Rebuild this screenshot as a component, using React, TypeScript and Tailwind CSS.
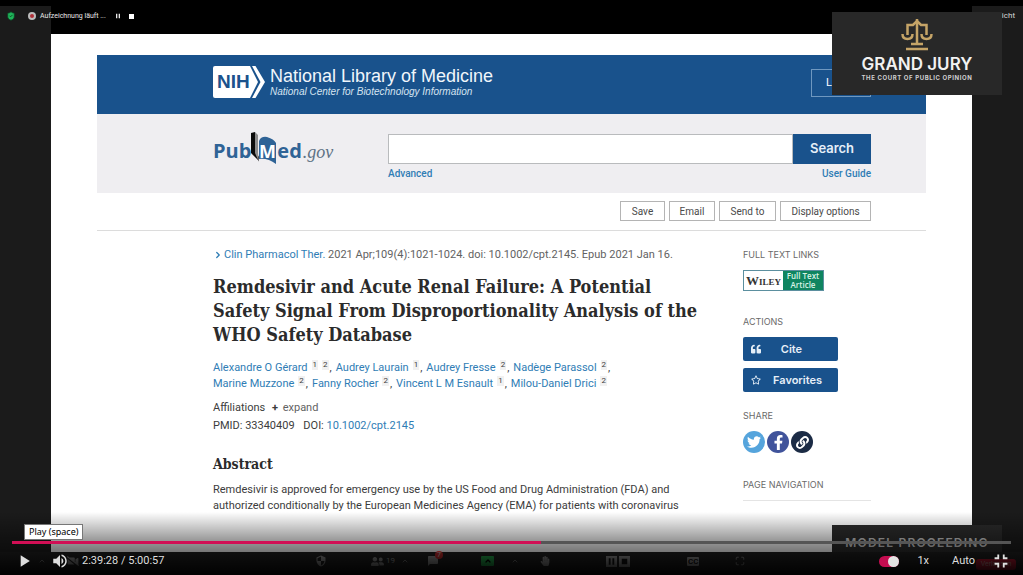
import { FC, ReactNode, useState } from 'react';
import { FaFacebookF, FaLink, FaQuoteLeft, FaRegStar, FaTwitter, FaUserFriends, FaHandPaper, FaVideoSlash } from 'react-icons/fa';
import { MdChatBubble, MdFullscreenExit, MdPause, MdPlayArrow, MdSecurity, MdStop, MdVolumeUp } from 'react-icons/md';
import { ChevronRight, ChevronUp, Maximize, ShieldCheck } from 'lucide-react';

interface Author {
    name: string;
    refs: string[];
}

const authors: Author[] = [
    { name: 'Alexandre O Gérard', refs: ['1', '2'] },
    { name: 'Audrey Laurain', refs: ['1'] },
    { name: 'Audrey Fresse', refs: ['2'] },
    { name: 'Nadège Parassol', refs: ['2'] },
    { name: 'Marine Muzzone', refs: ['2'] },
    { name: 'Fanny Rocher', refs: ['2'] },
    { name: 'Vincent L M Esnault', refs: ['1'] },
    { name: 'Milou-Daniel Drici', refs: ['2'] },
];

const DURATION = 18057;

const formatTime = (total: number) => {
    const h = Math.floor(total / 3600);
    const m = Math.floor((total % 3600) / 60);
    const s = total % 60;
    return `${h}:${String(m).padStart(2, '0')}:${String(s).padStart(2, '0')}`;
};

const NihLogo: FC = () => (
    <div className="relative h-8 w-[52px]">
        <svg viewBox="0 0 52 32" className="h-8 w-[52px]" aria-hidden="true">
            <path d="M2 0H37L45 16L37 32H2Q0 32 0 30V2Q0 0 2 0Z" fill="#fff" />
            <path d="M39 0H42.500L52 16L42.500 32H39L47.500 16Z" fill="#fff" />
        </svg>
        <span className="absolute left-1 top-1 font-['Liberation_Sans',sans-serif] text-[19px] font-bold leading-6 text-[#1b528c]">
            NIH
        </span>
    </div>
);

const PubMedLogo: FC = () => (
    <a href="#home" aria-label="PubMed.gov" className="flex items-start text-[#2f6396]">
        <span className="pt-[3px] font-['Open_Sans',sans-serif] text-[20px] font-bold leading-7">Pub</span>
        <svg viewBox="0 0 27 32" className="-ml-px -mt-[2px] h-8 w-[27px]" aria-hidden="true">
            <path d="M1 1L5 0V19L9 25V29L1 21Z" fill="#0b0b0b" />
            <path d="M5 0L8 3V21L9 30L5 21Z" fill="#8c8c8c" />
            <path d="M9 9Q11 4 17 5Q24 7 26 11V32Q18 26 9 27Z" fill="#2f6396" />
            <text x="9" y="26" fill="#fff" fontFamily="Open Sans" fontSize="18" fontWeight="700">M</text>
        </svg>
        <span className="pt-[3px] font-['Open_Sans',sans-serif] text-[20px] font-bold leading-7">ed</span>
        <span className="ml-px pt-[6px] font-['Liberation_Serif',serif] text-[18px] italic leading-6 text-[#5f7386]">.gov</span>
    </a>
);

const SiteHeader: FC = () => (
    <header>
        <div className="flex items-start justify-between bg-[#19528c] pb-4 pl-[116px] pr-[55px] pt-[10px]">
            <div className="flex items-start gap-[5px] pt-px text-white">
                <NihLogo />
                <div className="font-['Liberation_Sans',sans-serif]">
                    <p className="text-[18px] leading-5 text-[#f0f6fb]">National Library of Medicine</p>
                    <p className="text-[10px] italic leading-[11px] text-[#d5e3f0]">
                        National Center for Biotechnology Information
                    </p>
                </div>
            </div>
            <button className="mt-1 h-7 w-[60px] border border-[#6f98c0] text-[11px] text-white">Log in</button>
        </div>
        <div className="flex items-start justify-between bg-[#efeef1] pb-[11px] pl-[116px] pr-[55px] pt-5">
            <PubMedLogo />
            <form className="w-[483px]" onSubmit={(e) => e.preventDefault()}>
                <div className="flex">
                    <input
                        type="text"
                        aria-label="Search PubMed"
                        className="h-[30px] min-w-0 flex-1 border border-[#b9bbbd] bg-white px-2 text-xs"
                    />
                    <button className="h-[30px] w-[78px] bg-[#19528c] font-['Inter',sans-serif] text-[13px] font-semibold text-[#e6eff8]">
                        Search
                    </button>
                </div>
                <div className="flex justify-between pt-[2px] text-[10px] font-medium leading-4 text-[#2f7db5]">
                    <a href="#advanced">Advanced</a>
                    <a href="#guide">User Guide</a>
                </div>
            </form>
        </div>
    </header>
);

const PageActions: FC = () => (
    <div className="flex justify-end gap-1 border-b border-[#dcdcdc] pb-[9px] pr-[55px] pt-2 text-[10px] text-[#4a4a4a]">
        <button className="h-5 w-[45px] border border-[#b4b4b4]">Save</button>
        <button className="h-5 w-[46px] border border-[#b4b4b4]">Email</button>
        <button className="h-5 w-[57px] border border-[#b4b4b4]">Send to</button>
        <button className="h-5 w-[91px] border border-[#b4b4b4]">Display options</button>
    </div>
);

const Article: FC = () => (
    <article className="w-[490px] text-[11px] leading-4 text-[#3c3c3c]">
        <p className="flex items-center text-[#626262]">
            <ChevronRight className="mr-px size-[10px] text-[#2f7db5]" strokeWidth={3} />
            <span>
                <a href="#journal" className="text-[#2f7db5]">Clin Pharmacol Ther.</a> 2021 Apr;109(4):1021-1024. doi:
                10.1002/cpt.2145. Epub 2021 Jan 16.
            </span>
        </p>
        <h1 className="mt-3 font-['DejaVu_Serif_Condensed','DejaVu_Serif',serif] text-[18px] font-bold leading-6 text-[#2b2b2b]">
            Remdesivir and Acute Renal Failure: A Potential
            <br />
            Safety Signal From Disproportionality Analysis of the
            <br />
            WHO Safety Database
        </h1>
        <p className="mt-[13px] flex w-[410px] flex-wrap gap-x-1">
            {authors.map((author, i) => (
                <span key={author.name} className="flex">
                    <a href="#author" className="text-[#2f7db5]">{author.name}</a>
                    {author.refs.map((ref) => (
                        <sup key={ref} className="top-0 ml-1 h-[10px] bg-[#f1f1f1] px-px text-[8px] leading-[10px]">{ref}</sup>
                    ))}
                    {i < authors.length - 1 && <span className="ml-px">,</span>}
                </span>
            ))}
        </p>
        <p className="mt-2">
            Affiliations <button className="ml-1 text-[#626262]"><b className="mr-[2px] text-[#3c3c3c]">+</b> expand</button>
        </p>
        <p className="mt-[2px]">
            PMID: 33340409 <span className="ml-[6px]">DOI:</span> <a href="#doi" className="text-[#2f7db5]">10.1002/cpt.2145</a>
        </p>
        <h2 className="mt-5 font-['DejaVu_Serif_Condensed','DejaVu_Serif',serif] text-[14px] font-bold leading-5 text-[#2b2b2b]">
            Abstract
        </h2>
        <p className="mt-2">
            Remdesivir is approved for emergency use by the US Food and Drug Administration (FDA) and
            <br />
            authorized conditionally by the European Medicines Agency (EMA) for patients with coronavirus
        </p>
    </article>
);

const SideTitle: FC<{ children: ReactNode }> = ({ children }) => (
    <h3 className="font-['Inter',sans-serif] text-[9px] leading-4 text-[#6a6a6a]">{children}</h3>
);

const Sidebar: FC = () => (
    <aside className="w-32">
        <SideTitle>FULL TEXT LINKS</SideTitle>
        <a href="#wiley" className="mt-[7px] flex h-[21px] w-[81px] border border-[#5b8f9f]">
            <span className="flex-1 text-center font-['Liberation_Serif',serif] text-[13px] font-bold leading-5 text-[#333] [font-variant:small-caps]">
                Wiley
            </span>
            <span className="w-10 bg-[#0f8560] text-center font-['Open_Sans',sans-serif] text-[8px] font-semibold leading-[9px] text-[#d8f3e6]">
                Full Text Article
            </span>
        </a>
        <div className="mt-[23px] font-['Inter',sans-serif]">
            <SideTitle>ACTIONS</SideTitle>
            <button className="mt-[7px] flex h-6 w-[95px] items-center rounded-xs bg-[#19528c] pl-2 text-[11px] font-semibold text-[#e6eff8]">
                <FaQuoteLeft className="size-[10px]" />
                <span className="flex-1 pr-4 text-center">Cite</span>
            </button>
            <button className="mt-[7px] flex h-6 w-[95px] items-center rounded-xs bg-[#19528c] pl-2 text-[11px] font-semibold text-[#e6eff8]">
                <FaRegStar className="size-[10px]" />
                <span className="flex-1 pr-1 text-center">Favorites</span>
            </button>
        </div>
        <div className="mt-4">
            <SideTitle>SHARE</SideTitle>
            <div className="mt-[7px] flex gap-[2px] text-white">
                <a href="#twitter" aria-label="Twitter" className="flex size-[22px] items-center justify-center rounded-full bg-[#55a4dc]">
                    <FaTwitter className="size-[14px]" />
                </a>
                <a href="#facebook" aria-label="Facebook" className="flex size-[22px] items-center justify-center rounded-full bg-[#40539b]">
                    <FaFacebookF className="size-[15px]" />
                </a>
                <a href="#permalink" aria-label="Permalink" className="flex size-[22px] items-center justify-center rounded-full bg-[#1b2b45]">
                    <FaLink className="size-[13px]" />
                </a>
            </div>
        </div>
        <div className="mt-6 border-b border-[#e4e4e4] pb-[7px]">
            <SideTitle>PAGE NAVIGATION</SideTitle>
        </div>
    </aside>
);

const MeetingToolbar: FC = () => (
    <div className="flex h-[23px] items-center bg-[#2c2c2c] pb-[5px] text-[#c4c4c4]">
        <ChevronUp className="ml-[38px] size-2" />
        <FaVideoSlash className="ml-[21px] size-3" />
        <MdSecurity className="ml-[236px] size-3" />
        <FaUserFriends className="ml-11 size-[13px]" />
        <span className="ml-[2px] text-[8px]">19</span>
        <ChevronUp className="ml-[6px] size-2" />
        <span className="relative ml-[18px]">
            <MdChatBubble className="size-3" />
            <span className="absolute -top-1 left-2 size-2 rounded-full bg-[#ff3a3a] text-center text-[7px] leading-2 text-white">7</span>
        </span>
        <span className="ml-[42px] flex h-[10px] w-[13px] items-center justify-center rounded-[1px] bg-[#30e868] text-black">
            <ChevronUp className="size-2" strokeWidth={4} />
        </span>
        <ChevronUp className="ml-[17px] size-2" />
        <FaHandPaper className="ml-[21px] size-[10px]" />
        <span className="ml-[56px] flex gap-[2px] text-[#1a1a1a]">
            <MdPause className="size-[11px] bg-[#c4c4c4]" />
            <MdStop className="size-[11px] bg-[#c4c4c4]" />
        </span>
        <span className="ml-[57px] rounded-[1px] bg-[#c4c4c4] px-px text-[8px] font-bold leading-[9px] text-[#1a1a1a]">CC</span>
        <Maximize className="ml-[36px] size-[10px]" />
    </div>
);

const GrandJuryBadge: FC = () => (
    <div className="absolute right-[21px] top-3 flex h-[83px] w-[170px] flex-col items-center bg-[#282828] pt-[6px] font-['Inter',sans-serif]">
        <svg viewBox="0 0 32 33" className="h-[33px] w-8" fill="none" stroke="#c5a467" strokeWidth="2.500" aria-hidden="true">
            <path d="M16 1V26M10 26H22M5 31H27" />
            <path d="M6.500 17V7H12L16 3L20 7H25.500V17" />
            <path d="M1.500 16Q1.500 21 6.500 21Q11.500 21 11.500 16M20.500 16Q20.500 21 25.500 21Q30.500 21 30.500 16" />
        </svg>
        <p className="mt-[3px] text-[17px] font-semibold leading-5 text-[#f2f2f2]">GRAND JURY</p>
        <p className="text-[6px] font-bold leading-[8px] tracking-widest text-[#d0d0d0]">THE COURT OF PUBLIC OPINION</p>
    </div>
);

const PlayerControls: FC = () => {
    const [time, setTime] = useState(9568);
    const [autoplay, setAutoplay] = useState(true);
    const percent = (time / DURATION) * 100;

    return (
        <div className="absolute inset-x-0 bottom-0 bg-[linear-gradient(to_bottom,transparent_0%,#00000066_45%,#00000088_63%,#000000a8_64%,#000000f8_100%)] px-3 pt-[29px]">
            <input
                type="range"
                aria-label="Seek"
                min={0}
                max={DURATION}
                value={time}
                onChange={(e) => setTime(Number(e.target.value))}
                className="block h-[3px] w-full appearance-none [&::-webkit-slider-thumb]:size-0 [&::-webkit-slider-thumb]:appearance-none"
                style={{ background: `linear-gradient(to right, #d10f55 ${percent}%, #555 ${percent}%)` }}
            />
            <div className="flex h-[31px] items-center pt-[3px] text-[11px] text-[#dedede]">
                <button aria-label="Play" className="ml-[2px]"><MdPlayArrow className="size-5" /></button>
                <button aria-label="Mute" className="ml-[17px]"><MdVolumeUp className="size-[18px]" /></button>
                <span className="ml-[13px] whitespace-pre">{formatTime(time)} / {formatTime(DURATION)}</span>
                <label className="relative ml-auto h-[11px] w-5">
                    <input
                        type="checkbox"
                        aria-label="Autoplay"
                        checked={autoplay}
                        onChange={() => setAutoplay(!autoplay)}
                        className="peer block h-[11px] w-5 appearance-none rounded-full bg-[#666] checked:bg-[#c40d50]"
                    />
                    <span className="absolute left-0 top-0 size-[11px] rounded-full bg-[#e4e4e4] peer-checked:left-[9px]" />
                </label>
                <button className="ml-[18px]">1x</button>
                <button className="ml-[23px]">Auto</button>
                <button aria-label="Exit full screen" className="-mr-px ml-[15px]"><MdFullscreenExit className="size-[22px]" /></button>
            </div>
        </div>
    );
};

const App: FC = () => {
    return (
        <main className="relative flex min-h-screen flex-col overflow-hidden bg-black font-['Roboto',sans-serif]">
            <div className="flex flex-1">
                <div className="mt-[6px] w-[51px] bg-[#1b1b1b]" />
                <div className="mt-[34px] flex-1 bg-white px-[46px] pt-[21px]">
                    <SiteHeader />
                    <PageActions />
                    <div className="flex justify-between pl-[116px] pr-[55px] pt-4">
                        <Article />
                        <Sidebar />
                    </div>
                </div>
                <div className="mt-[6px] w-[51px] bg-[#1b1b1b] pr-2 pt-1 text-right text-[8px] leading-3 text-[#d8d8d8]">
                    Ansicht
                </div>
            </div>
            <MeetingToolbar />

            {/* recording status */}
            <div className="absolute left-[6px] top-[10px] flex items-center text-[#e8e8e8]">
                <ShieldCheck className="size-[10px] fill-[#1fb45a] text-[#0e3d20]" />
                <span className="ml-3 flex size-2 items-center justify-center rounded-full bg-[#bcbcbc]">
                    <span className="size-1 rounded-full bg-[#b03038]" />
                </span>
                <span className="ml-1 text-[7px] leading-3">Aufzeichnung läuft ...</span>
                <MdPause className="ml-2 size-2" />
                <span className="ml-[7px] size-[5px] bg-white" />
            </div>

            <GrandJuryBadge />
            <div className="absolute bottom-4 right-[21px] h-[34px] w-[170px] bg-[#2a2a2a] pt-[10px] text-center font-['Inter',sans-serif] text-[12px] font-semibold leading-4 tracking-widest text-[#c4c4c4]">
                MODEL PROCEEDING
            </div>
            <button className="absolute bottom-[5px] right-[7px] h-[11px] w-10 rounded-[3px] bg-[#f02040] text-[7px] leading-[11px] text-[#ffc0c0]">
                Verlassen
            </button>
            <PlayerControls />
            <div role="tooltip" className="absolute bottom-[35px] left-6 border border-[#777] bg-white px-1 font-['Noto_Sans',sans-serif] text-[9px] leading-[14px] text-black">
                Play (space)
            </div>
        </main>
    );
};

export default App;
